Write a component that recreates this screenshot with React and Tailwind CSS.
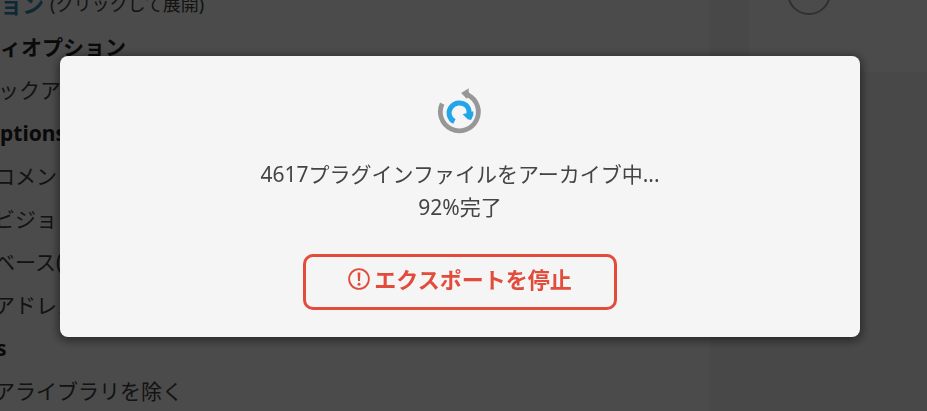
const options = [
  { text: "ィオプション", type: "heading" },
  { text: "ックアップ", type: "indented" },
  { text: "ptions", type: "heading" },
  { text: "ロメント" },
  { text: "ビジョン" },
  { text: "ベース(SQL)" },
  { text: "アドレス" },
  { text: "s", type: "suffix" },
  { text: "アライブラリを除く" },
];

const rowStyles = {
  heading: "pl-1.5 font-bold text-[#222222]",
  indented: "pl-1",
  suffix: "pl-0.5 font-bold text-[#222222]",
};

function SpinnerLogo() {
  return (
    <svg width="46" height="46" viewBox="0 0 46 46" fill="none" aria-hidden="true">
      <path d="M5.2 15.6A19 19 0 1 0 30.8 6.8" stroke="#979797" strokeWidth="4.8" />
      <path d="M24.2 5 31.8 0.2 31.6 3.6 33.4 6.8 29.6 10.8Z" fill="#979797" />
      <path
        d="M17.4 33.6C11.8 30.8 10.6 24 14 19.2C17.6 14.4 24.8 13.6 29 17.2C31.4 19.4 32.4 22 32 25.6"
        stroke="#23a5ea"
        strokeWidth="5"
      />
      <path d="M25.6 26.2 36.4 23.2 36.2 27.4 34 32 30.6 31.2Z" fill="#23a5ea" />
    </svg>
  );
}

function AlertIcon() {
  return (
    <svg width="22" height="22" viewBox="0 0 22 22" fill="none" aria-hidden="true">
      <circle cx="11" cy="11" r="9.9" stroke="#e24c3b" strokeWidth="1.8" />
      <path d="M9.6 4.6h2.8l-.4 8.4h-2z" fill="#e24c3b" />
      <circle cx="11" cy="16.2" r="1.5" fill="#e24c3b" />
    </svg>
  );
}

function ExportPage() {
  return (
    <div className="grid h-screen grid-cols-[4fr_1fr] gap-[39px] overflow-hidden bg-[#f0f0f0] text-[#404040]">
      <main className="overflow-hidden whitespace-nowrap bg-[#fafafa]">
        <div className="-mt-4 mb-0.5 flex h-10 items-center gap-1.5 text-lg">
          <a href="#advanced" className="text-[22px] font-bold text-[#2f86ad]">
            ョン
          </a>
          <span>(クリックして展開)</span>
        </div>
        <ul className="-ml-1.5 text-[21px]">
          {options.map(({ text, type }) => (
            <li key={text} className={`flex h-[43px] items-center ${rowStyles[type] ?? ""}`}>
              {text}
            </li>
          ))}
        </ul>
      </main>
      <aside>
        <div className="h-[72px] bg-[#fafafa] pl-[38px]">
          <svg width="44" height="15" viewBox="0 0 44 15" fill="none" aria-hidden="true">
            <circle cx="22" cy="-7" r="21" stroke="#a0a0a0" strokeWidth="2" />
          </svg>
        </div>
      </aside>
    </div>
  );
}

export default function App() {
  return (
    <div className="font-['Noto_Sans','Noto_Sans_CJK_JP',sans-serif]">
      <ExportPage />
      <div className="fixed inset-0 flex items-start justify-center bg-black/70 pt-14 pr-[67px] pl-[60px]">
        <div
          role="dialog"
          aria-modal="true"
          aria-label="エクスポート"
          className="flex w-full max-w-[800px] flex-col items-center rounded-lg bg-[#f5f5f5] px-6 pt-8 pb-[27px] text-[21px] text-[#444444] shadow-[0_2px_10px_2px_rgba(0,0,0,0.45)]"
        >
          <SpinnerLogo />
          <p className="mt-6 text-center leading-[33px]">
            4617プラグインファイルをアーカイブ中...
            <br />
            92%完了
          </p>
          <button
            type="button"
            className="mt-[30px] flex h-14 w-full max-w-[314px] items-center justify-center gap-1 rounded-[10px] border-3 border-[#e24c3b] pb-1.5 text-[22px] font-bold text-[#e24c3b]"
          >
            <AlertIcon />
            エクスポートを停止
          </button>
        </div>
      </div>
    </div>
  );
}
